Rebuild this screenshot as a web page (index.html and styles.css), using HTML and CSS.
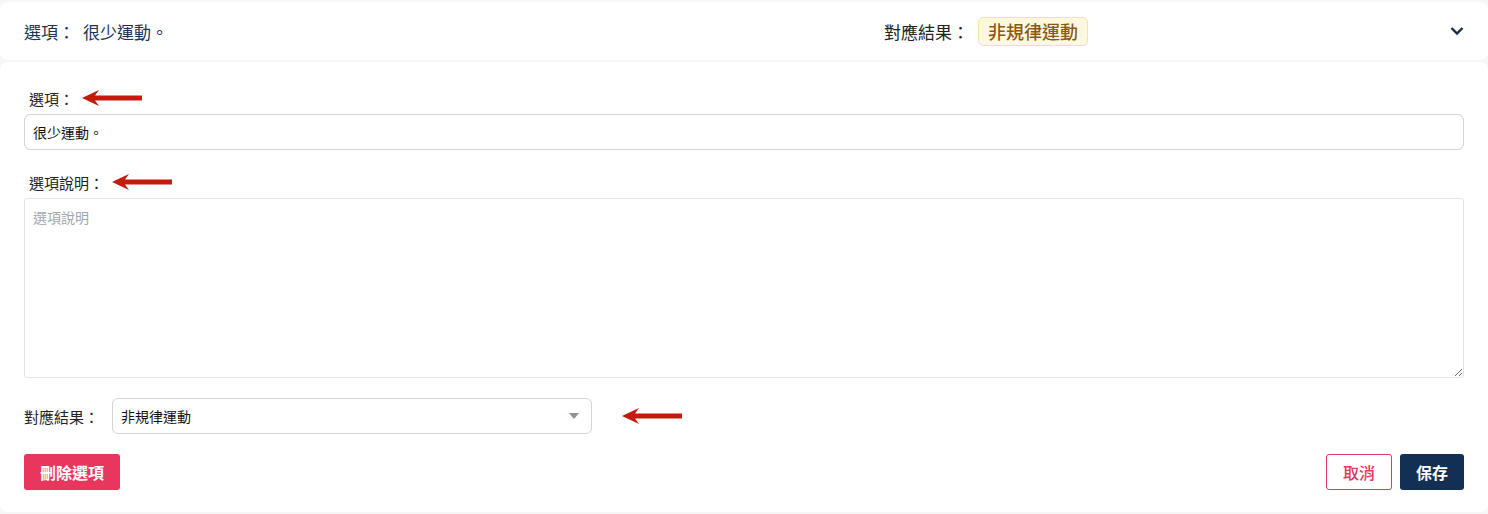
FILE: index.html
```html
<!DOCTYPE html>
<html lang="zh-Hant">
<head>
    <meta charset="UTF-8">
    <title>選項編輯</title>
    <link rel="stylesheet" href="styles.css">
</head>
<body>
    <div class="option-head">
        <div class="head-title">選項：<span class="head-value">很少運動。</span></div>
        <div class="head-result">
            對應結果：
            <span class="badge">非規律運動</span>
        </div>
        <svg class="chevron" width="14" height="10" viewBox="0 0 14 10">
            <path d="M1.5 2 L7 7.5 L12.5 2" fill="none" stroke="#1a2b45" stroke-width="2.4"/>
        </svg>
    </div>

    <div class="option-body">
        <div class="field">
            <div class="label-row">
                <label for="opt">選項：</label>
                <svg class="arrow" width="60" height="16" viewBox="0 0 60 16"><path d="M0 8 L17 0 L13 5.5 L60 5.5 L60 10.5 L13 10.5 L17 16 Z" fill="#c41a0c"/></svg>
            </div>
            <input type="text" id="opt" class="text-input" value="很少運動。">
        </div>

        <div class="field">
            <div class="label-row">
                <label for="desc">選項說明：</label>
                <svg class="arrow" width="60" height="16" viewBox="0 0 60 16"><path d="M0 8 L17 0 L13 5.5 L60 5.5 L60 10.5 L13 10.5 L17 16 Z" fill="#c41a0c"/></svg>
            </div>
            <textarea id="desc" class="text-area" placeholder="選項說明"></textarea>
        </div>

        <div class="result-row">
            <label for="result">對應結果：</label>
            <div class="select-box">
                <span>非規律運動</span>
                <svg width="12" height="8" viewBox="0 0 12 8"><path d="M1 1 L11 1 L6 7 Z" fill="#8e939b"/></svg>
            </div>
            <svg class="arrow" width="60" height="16" viewBox="0 0 60 16"><path d="M0 8 L17 0 L13 5.5 L60 5.5 L60 10.5 L13 10.5 L17 16 Z" fill="#c41a0c"/></svg>
        </div>

        <div class="actions">
            <button type="button" class="btn btn-delete">刪除選項</button>
            <div class="actions-right">
                <button type="button" class="btn btn-cancel">取消</button>
                <button type="button" class="btn btn-save">保存</button>
            </div>
        </div>
    </div>
</body>
</html>
```

FILE: styles.css
```css
body {
    font-family: "Noto Sans CJK TC", "Noto Sans", sans-serif;
    margin: 0;
    padding: 2px 0 2px 0;
    background-color: #f6f6f7;
    color: #222;
}
.option-head {
    display: flex;
    align-items: center;
    height: 58px;
    padding: 0 24px;
    background-color: #fff;
    border-radius: 8px;
    box-sizing: border-box;
}
.head-title {
    width: 860px;
    font-size: 17px;
    color: #1c3354;
}
.head-value {
    margin-left: 8px;
}
.head-result {
    flex: 1;
    display: flex;
    align-items: center;
    font-size: 17px;
    color: #222;
}
.badge {
    margin-left: 9px;
    padding: 0 9px;
    height: 27px;
    line-height: 27px;
    font-size: 18px;
    font-weight: 500;
    color: #8a5a12;
    background-color: #fff8e1;
    border: 1px solid #f6e3a9;
    border-radius: 5px;
}
.option-body {
    margin-top: 2px;
    background-color: #fff;
    border-radius: 8px;
    padding: 24px 24px 22px 24px;
    height: 450px;
    box-sizing: border-box;
}
.field {
    margin-bottom: 20px;
}
.label-row {
    display: flex;
    align-items: center;
    height: 24px;
    margin-bottom: 4px;
    padding-left: 5px;
}
.label-row label {
    font-size: 15px;
    color: #222;
    margin-right: 8px;
}
.text-input {
    display: block;
    width: 100%;
    height: 36px;
    padding: 0 8px;
    border: 1px solid #d3d3d8;
    border-radius: 6px;
    box-sizing: border-box;
    font-family: inherit;
    font-size: 14px;
    color: #111;
}
.text-area {
    display: block;
    width: 100%;
    height: 180px;
    padding: 8px;
    border: 1px solid #e3e3e3;
    border-radius: 3px;
    box-sizing: border-box;
    font-family: inherit;
    font-size: 14px;
    resize: vertical;
}
.text-area::placeholder {
    color: #a3a6ad;
}
.result-row {
    display: flex;
    align-items: center;
    margin-bottom: 20px;
}
.result-row label {
    font-size: 15px;
    color: #222;
    width: 88px;
}
.select-box {
    display: flex;
    align-items: center;
    justify-content: space-between;
    width: 480px;
    height: 36px;
    padding: 0 11px 0 8px;
    border: 1px solid #d3d3d8;
    border-radius: 6px;
    box-sizing: border-box;
    font-size: 14px;
    color: #111;
    margin-right: 30px;
}
.actions {
    display: flex;
    justify-content: space-between;
    align-items: center;
}
.actions-right {
    display: flex;
    gap: 8px;
}
.btn {
    height: 36px;
    padding: 0 16px;
    border-radius: 3px;
    font-family: inherit;
    font-size: 16px;
    font-weight: bold;
    cursor: pointer;
    box-sizing: border-box;
}
.btn-delete {
    background-color: #e9365e;
    color: #fff;
    border: none;
}
.btn-cancel {
    background-color: #fff;
    color: #e9365e;
    border: 1px solid #e9365e;
    font-weight: 500;
    width: 66px;
}
.btn-save {
    background-color: #132f52;
    color: #fff;
    border: none;
    width: 64px;
}
```
